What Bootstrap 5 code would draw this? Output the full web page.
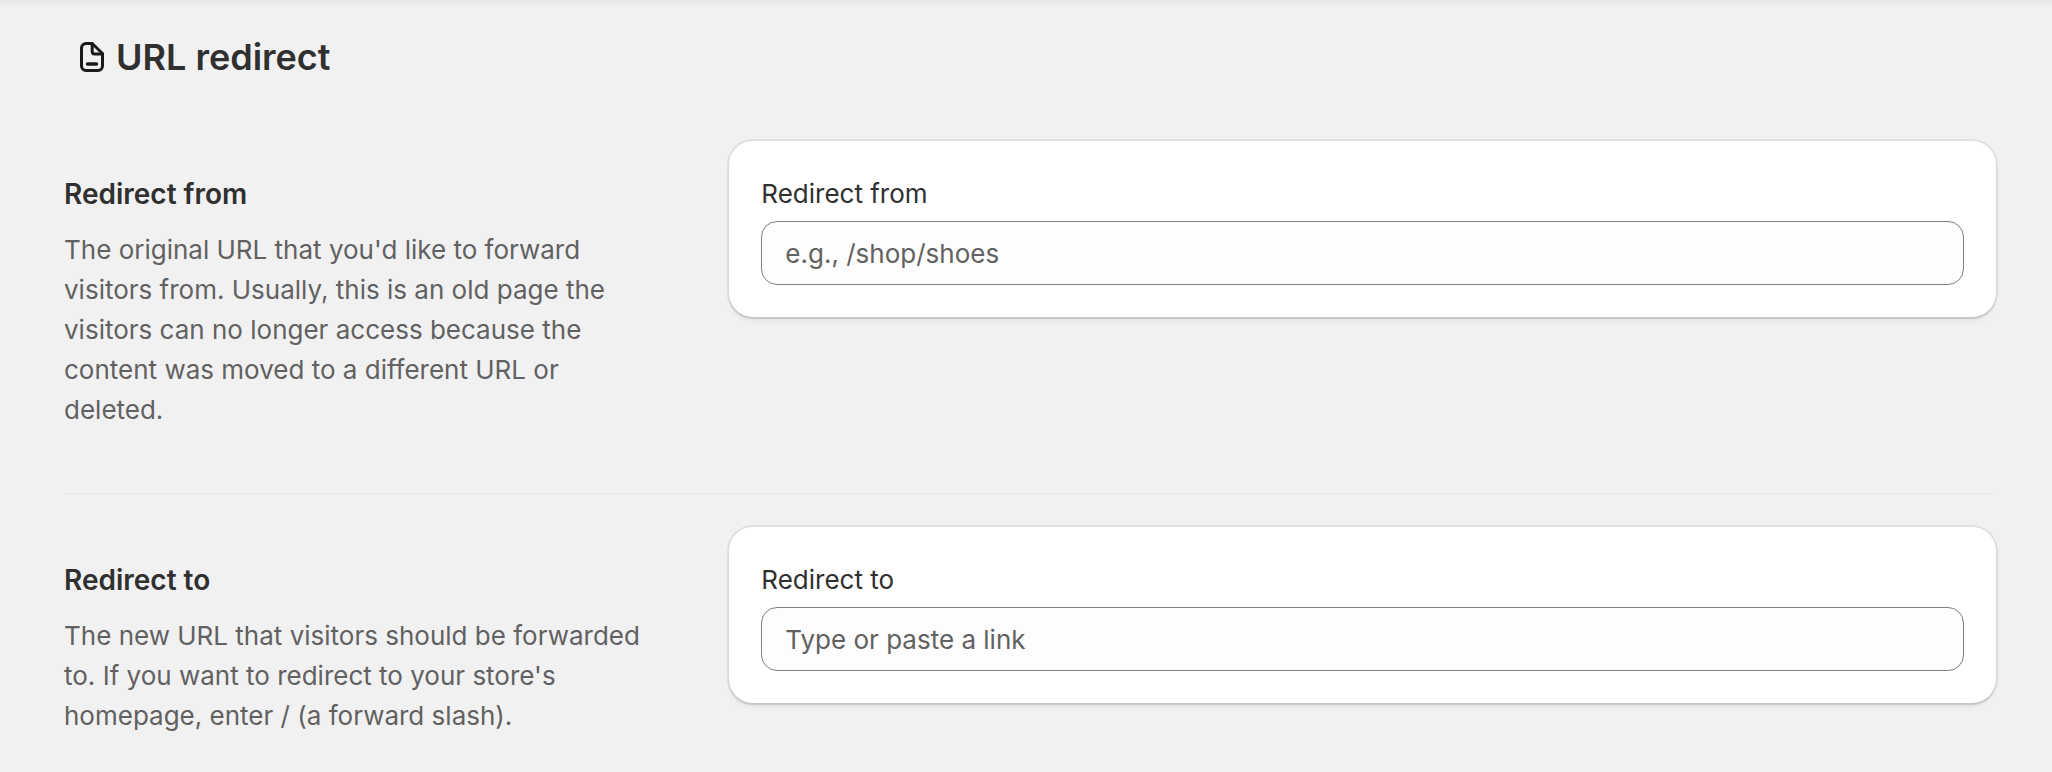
<!DOCTYPE html>
<html lang="en">
<head>
<meta charset="utf-8">
<meta name="viewport" content="width=device-width, initial-scale=1">
<title>URL redirect</title>
<link href="https://cdn.jsdelivr.net/npm/bootstrap@5.3.0/dist/css/bootstrap.min.css" rel="stylesheet">
<style>
  body {
    background: #f1f1f1 linear-gradient(#e8e8e8, #f1f1f1) no-repeat 0 0 / 100% 8px;
    color: #303030;
    font-family: Inter, "Liberation Sans", sans-serif;
    font-size: 26px;
    line-height: 40px;
    font-weight: 425;
  }
  .page { padding: 33px 56px 0 64px; }
  .page-head { padding: 0 8px; gap: 4px; margin-bottom: 60px; }
  .page-title { font-size: 36px; line-height: 48px; font-weight: 575; }
  .page-icon { width: 40px; height: 40px; flex: none; }
  .setting { display: grid; grid-template-columns: minmax(0, 1fr) minmax(0, 2fr); gap: 32px; align-items: start; }
  .setting-text { padding: 33px 32px 31px 0; }
  .setting-title { font-size: 28px; line-height: 40px; font-weight: 600; margin-bottom: 16px; }
  .setting-note { color: #616161; }
  .setting-card {
    border: 0;
    border-radius: 24px;
    padding: 33px 32px 32px;
    box-shadow: 0 0 0 2px rgba(0, 0, 0, .07), 0 2px 2px rgba(0, 0, 0, .08), 0 6px 6px -2px rgba(0, 0, 0, .05);
  }
  .setting-card .form-label { margin-bottom: 7px; }
  .setting-card .form-control {
    height: 64px;
    padding: 0 23px;
    border: 1px solid #808080;
    border-radius: 16px;
    background: #fdfdfd;
    color: #303030;
    font-size: 26px;
    line-height: 40px;
    font-weight: 425;
  }
  .setting-card .form-control::placeholder { color: #616161; opacity: 1; }
  .rule { border: 0; border-top: 2px solid #ebebeb; opacity: 1; margin: 32px 0; }
</style>
</head>
<body>
<main class="page">
  <header class="page-head d-flex align-items-center">
    <svg class="page-icon" viewBox="0 0 40 40" fill="none" stroke="#1a1a1a" stroke-width="3" stroke-linecap="round" stroke-linejoin="round" aria-hidden="true">
      <path d="M20.2 6.5H14A4.500 4.500 0 0 0 9.500 11V29A4.500 4.500 0 0 0 14 33.500H26A4.500 4.500 0 0 0 30.500 29V16.500Z"/>
      <path d="M20.200 6.500V14.500A2.500 2.500 0 0 0 22.700 17H30.500"/>
      <path d="M15.500 27H24.500" stroke-width="3.500"/>
    </svg>
    <h1 class="page-title mb-0">URL redirect</h1>
  </header>

  <section class="setting">
    <div class="setting-text">
      <h2 class="setting-title">Redirect from</h2>
      <p class="setting-note mb-0">The original URL that you'd like to forward visitors from. Usually, this is an old page the visitors can no longer access because the content was moved to a different URL or deleted.</p>
    </div>
    <div class="card setting-card">
      <label class="form-label" for="redirect-from">Redirect from</label>
      <input class="form-control" type="text" id="redirect-from" placeholder="e.g., /shop/shoes">
    </div>
  </section>

  <hr class="rule">

  <section class="setting">
    <div class="setting-text pb-0">
      <h2 class="setting-title">Redirect to</h2>
      <p class="setting-note mb-0">The new URL that visitors should be forwarded to. If you want to redirect to your store's homepage, enter / (a forward slash).</p>
    </div>
    <div class="card setting-card">
      <label class="form-label" for="redirect-to">Redirect to</label>
      <input class="form-control" type="text" id="redirect-to" placeholder="Type or paste a link">
    </div>
  </section>
</main>
<script src="https://cdn.jsdelivr.net/npm/bootstrap@5.3.0/dist/js/bootstrap.bundle.min.js"></script>
</body>
</html>
